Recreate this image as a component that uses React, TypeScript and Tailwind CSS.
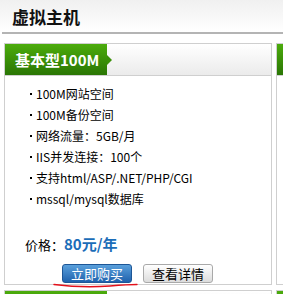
import React from "react";

const features = [
  "100M网站空间",
  "100M备份空间",
  "网络流量：5GB/月",
  "IIS并发连接：100个",
  "支持html/ASP/.NET/PHP/CGI",
  "mssql/mysql数据库",
];

const font = { fontFamily: '"Noto Sans CJK SC", "Liberation Sans", sans-serif' };

function PlanTab({ name }: { name?: string }) {
  return (
    <div className="relative h-[32px] flex border-b border-[#cfcfcf] bg-gradient-to-b from-white to-[#ebebeb]">
      <div className="relative w-[102px] h-[31px] bg-gradient-to-b from-[#4cac0d] to-[#2a7604] flex items-center pl-[10px]">
        {name && <span className="text-white font-bold text-[15px] leading-none">{name}</span>}
        {/* arrow on the right edge */}
        <span className="absolute right-[-5px] top-[11px] w-0 h-0 border-y-[5px] border-y-transparent border-l-[5px] border-l-[#3a9008]" />
      </div>
    </div>
  );
}

function PlanCard({ name, showBody = true }: { name?: string; showBody?: boolean }) {
  return (
    <div className="relative w-[268px] h-[242px] border border-[#cfcfcf] bg-white">
      <PlanTab name={name} />
      {showBody && (
        <div className="flex flex-col">
          <ul className="pl-[25px] pt-[11px] flex flex-col gap-[7px] text-[12px] leading-[14px] text-black">
            {features.map((f) => (
              <li key={f} className="flex items-center gap-[4px]">
                <span className="w-[2px] h-[2px] bg-black" />
                <span>{f}</span>
              </li>
            ))}
          </ul>
          <div className="flex items-end pl-[20px] mt-[29px] h-[18px]">
            <span className="text-[13px] leading-[16px] text-black">价格：</span>
            <span className="text-[15px] leading-[18px] font-bold text-[#1b6db8]">80元/年</span>
          </div>
          <div className="flex gap-[11px] pl-[57px] mt-[11px]">
            <button className="w-[70px] h-[19px] rounded-[3px] border border-[#1d5696] bg-gradient-to-b from-[#5aa0dc] to-[#1f62ad] text-white text-[13px] leading-none flex items-center justify-center">
              立即购买
            </button>
            <button className="w-[70px] h-[19px] rounded-[3px] border border-[#a9a9a9] bg-gradient-to-b from-white to-[#dcdcdc] text-black text-[13px] leading-none flex items-center justify-center">
              查看详情
            </button>
          </div>
        </div>
      )}
    </div>
  );
}

export default function App() {
  return (
    <div className="relative w-[283px] h-[294px] overflow-hidden bg-white" style={font}>
      <div className="h-[32px] bg-gradient-to-b from-[#f0f0f0] to-white flex items-center pl-[12px]">
        <h1 className="text-[17px] font-bold text-[#111] leading-none">虚拟主机</h1>
      </div>
      <div className="ml-[2px] h-[2px] bg-[#b4b4b4]" />

      <div className="ml-[4px] mt-[9px] grid grid-cols-[268px_268px] gap-x-[4px] gap-y-[5px] w-max">
        <PlanCard name="基本型100M" />
        <PlanCard showBody={false} />
        <PlanCard showBody={false} />
        <PlanCard showBody={false} />
      </div>

      {/* red marker line under the buy button */}
      <svg className="absolute left-0 top-0 pointer-events-none" width="283" height="294">
        <path
          d="M54 284.5 C 70 286.5, 90 287.5, 110 286 C 122 285, 130 284.5, 137 284.5"
          fill="none"
          stroke="#e3101a"
          strokeWidth="1.4"
          strokeLinecap="round"
        />
      </svg>
    </div>
  );
}
